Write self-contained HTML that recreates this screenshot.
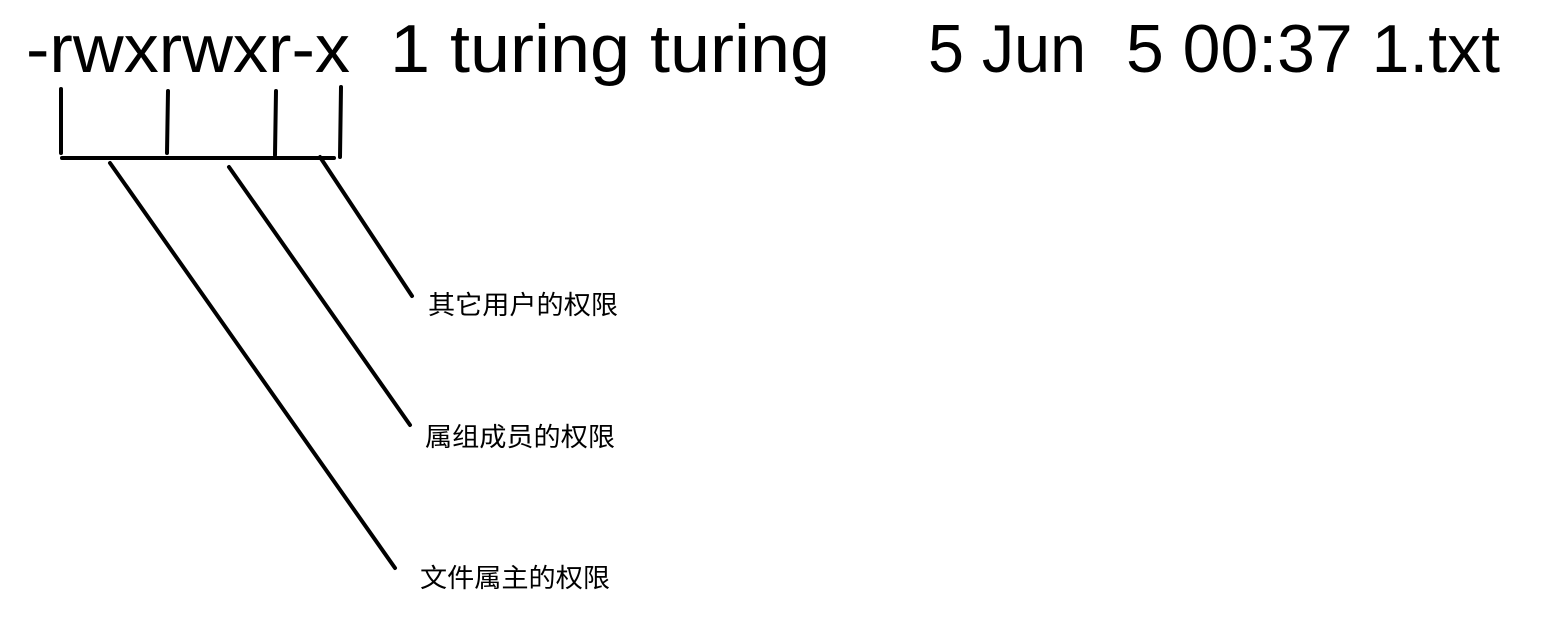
<!DOCTYPE html>
<html><head><meta charset="utf-8"><style>
html,body{margin:0;padding:0;background:#fff;width:1550px;height:624px;overflow:hidden}
</style></head><body>
<svg width="1550" height="624" xmlns="http://www.w3.org/2000/svg">
<g font-family="Liberation Sans, DejaVu Sans, sans-serif" font-size="68" fill="#000">
<text x="26" y="72" textLength="324" lengthAdjust="spacingAndGlyphs">-rwxrwxr-x</text>
<text x="390" y="72" textLength="440" lengthAdjust="spacingAndGlyphs">1 turing turing</text>
<text x="928" y="72" textLength="158" lengthAdjust="spacingAndGlyphs">5 Jun</text>
<text x="1126" y="72" textLength="374" lengthAdjust="spacingAndGlyphs">5 00:37 1.txt</text>
</g>
<g stroke="#000" stroke-width="4" stroke-linecap="round" fill="none">
<line x1="61" y1="89" x2="61" y2="153"/>
<line x1="168" y1="91" x2="167" y2="153"/>
<line x1="276" y1="91" x2="275" y2="155"/>
<line x1="341" y1="87" x2="340" y2="157"/>
<line x1="62" y1="158" x2="334" y2="158"/>
<line x1="110" y1="163" x2="395" y2="568"/>
<line x1="229" y1="167" x2="410" y2="425"/>
<line x1="320" y1="157" x2="412" y2="296"/>
</g>
<g font-family="Liberation Sans, Noto Sans CJK SC, sans-serif" font-size="26" fill="#000">
<text x="428" y="314" textLength="190" lengthAdjust="spacingAndGlyphs">其它用户的权限</text>
<text x="425" y="446" textLength="190" lengthAdjust="spacingAndGlyphs">属组成员的权限</text>
<text x="420" y="587" textLength="190" lengthAdjust="spacingAndGlyphs">文件属主的权限</text>
</g>
</svg>
</body></html>
